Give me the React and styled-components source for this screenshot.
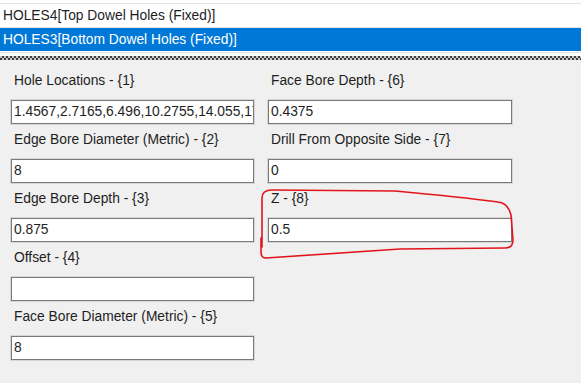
import React from "react"
import styled, { createGlobalStyle } from "styled-components"

const GlobalStyle = createGlobalStyle`
  html, body {
    margin: 0;
    padding: 0;
    background: #f0f0f0;
  }
  body {
    font-family: "Liberation Sans", Arial, sans-serif;
    font-size: 13.8px;
    color: #1e1e1e;
  }
`

const Page = styled.div`
  position: relative;
  width: 581px;
  height: 383px;
  overflow: hidden;
  background: #f0f0f0;
`

const ListBox = styled.div`
  background: #fff;
  height: 56px;
`

const ListStub = styled.div`
  height: 3px;
  border-bottom: 1px solid #e3e3e3;
`

const ListRow = styled.div`
  height: 23px;
  line-height: 23px;
  padding-left: 3px;
  white-space: nowrap;
  border-bottom: 1px solid ${p => (p.selected ? "#fff" : "#e3e3e3")};
  background: ${p => (p.selected ? "#0078d7" : "#fff")};
  color: ${p => (p.selected ? "#fff" : "#1e1e1e")};
`

const ListFoot = styled.div`
  height: 1px;
  background: #e3e3e3;
`

const Splitter = styled.div`
  height: 4px;
  background-color: #f0f0f0;
  background-image: repeating-conic-gradient(#3c3c3c 0% 25%, #c8c8c8 0% 50%);
  background-size: 4px 4px;
`

const Panel = styled.div`
  display: grid;
  grid-template-columns: 243px 244px;
  column-gap: 14px;
  padding: 5px 0 0 11px;
  align-items: start;
`

const Column = styled.div`
  display: flex;
  flex-direction: column;
`

const Field = styled.div`
  display: flex;
  flex-direction: column;
`

const Label = styled.div`
  height: 35px;
  box-sizing: border-box;
  padding: 8px 0 0 3px;
  line-height: 16px;
  white-space: nowrap;
`

const TextBox = styled.div`
  height: 24px;
  box-sizing: border-box;
  border: 1px solid #7a7a7a;
  box-shadow: 0 0 0 1px #d6d6d6;
  background: #fff;
  line-height: 22px;
  padding-left: 2px;
  white-space: nowrap;
  overflow: hidden;
`

const Annotation = styled.svg`
  position: absolute;
  left: 0;
  top: 0;
  pointer-events: none;
`

const left = [
  ["Hole Locations - {1}", "1.4567,2.7165,6.496,10.2755,14.055,17"],
  ["Edge Bore Diameter (Metric) - {2}", "8"],
  ["Edge Bore Depth - {3}", "0.875"],
  ["Offset - {4}", ""],
  ["Face Bore Diameter (Metric) - {5}", "8"]
]

const right = [
  ["Face Bore Depth - {6}", "0.4375"],
  ["Drill From Opposite Side - {7}", "0"],
  ["Z - {8}", "0.5"]
]

const renderField = ([label, value]) => (
  <Field key={label}>
    <Label>{label}</Label>
    <TextBox>{value}</TextBox>
  </Field>
)

const App = () => (
  <Page>
    <GlobalStyle />
    <ListBox>
      <ListStub />
      <ListRow>HOLES4[Top Dowel Holes (Fixed)]</ListRow>
      <ListRow selected>HOLES3[Bottom Dowel Holes (Fixed)]</ListRow>
      <ListFoot />
    </ListBox>
    <Splitter />
    <Panel>
      <Column>{left.map(renderField)}</Column>
      <Column>{right.map(renderField)}</Column>
    </Panel>
    <Annotation width="581" height="383" viewBox="0 0 581 383">
      <path
        d="M 262 247 L 262 198 Q 262 190 272 190 L 395 191 Q 460 197 498 202 Q 508 203 511 215 L 513 240 Q 513 248 505 248 L 400 249 L 266 258 Q 261 258 261 252 L 261 238"
        fill="none"
        stroke="#e3141b"
        strokeWidth="1.6"
        strokeLinecap="round"
        strokeLinejoin="round"
      />
    </Annotation>
  </Page>
)

export default App
